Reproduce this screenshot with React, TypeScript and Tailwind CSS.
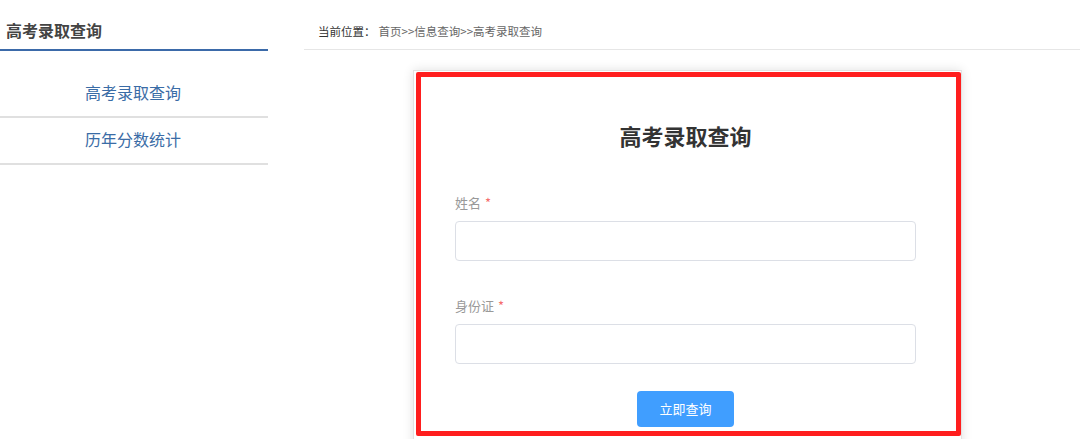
import React from 'react';

const font = "font-['Noto_Sans_CJK_SC','Noto_Sans',sans-serif]";

const menuItems = ['高考录取查询', '历年分数统计'];

const fields = [
  { label: '姓名', gap: 'mt-[45px]' },
  { label: '身份证', gap: 'mt-[35px]' },
];

export default function App() {
  return (
    <div className={`flex h-[439px] w-[1080px] overflow-hidden bg-white ${font}`}>
      {/* sidebar */}
      <aside className="w-[268px] shrink-0">
        <div className="h-[51px] border-b-2 border-[#3b6aa9] pl-[6px] pt-[19px]">
          <h2 className="text-[16px] font-bold leading-[22px] text-[#444]">高考录取查询</h2>
        </div>
        <ul className="pt-[20px]">
          {menuItems.map((item) => (
            <li
              key={item}
              className="flex h-[47px] items-center justify-center border-b-2 border-[#e0e0e0] pb-[4px] pr-[2px] text-[16px] text-[#3a6ca6]"
            >
              {item}
            </li>
          ))}
        </ul>
      </aside>

      {/* main */}
      <main className="ml-[36px] flex-1">
        <div className="flex h-[50px] items-start border-b border-[#e6e6e6] pl-[14px] pt-[22px] text-[11.5px] leading-[18px]">
          <span className="text-[#333]">当前位置：</span>
          <span className="ml-[3px] text-[#666]">首页&gt;&gt;信息查询&gt;&gt;高考录取查询</span>
        </div>

        <div className="relative ml-[109px] mt-[20px] w-[549px] border border-[#e2e2e2] bg-white pb-10 pl-[41px] pr-[45px] pt-[51px] shadow-[0_0_10px_rgba(0,0,0,0.12)]">
          <h1 className="text-center text-[22px] font-bold leading-[26px] text-[#333]">高考录取查询</h1>

          {fields.map((f) => (
            <div key={f.label} className={f.gap}>
              <label className="block text-[13px] leading-[20px] text-[#999]">
                {f.label}
                <span className="ml-[4px] text-[#f56c6c]">*</span>
              </label>
              <input
                type="text"
                className="mt-[8px] block h-[40px] w-full rounded-[4px] border border-[#dcdfe6] bg-white px-3 outline-none"
              />
            </div>
          ))}

          <div className="mt-[27px] flex justify-center">
            <button
              type="button"
              className="h-[36px] w-[97px] rounded-[4px] bg-[#409eff] text-[13px] text-white"
            >
              立即查询
            </button>
          </div>

          {/* annotation frame */}
          <div className="pointer-events-none absolute left-[2px] top-[1px] h-[364px] w-[545px] rounded-[2px] border-[5px] border-[#ff1e1e]" />
        </div>
      </main>
    </div>
  );
}
